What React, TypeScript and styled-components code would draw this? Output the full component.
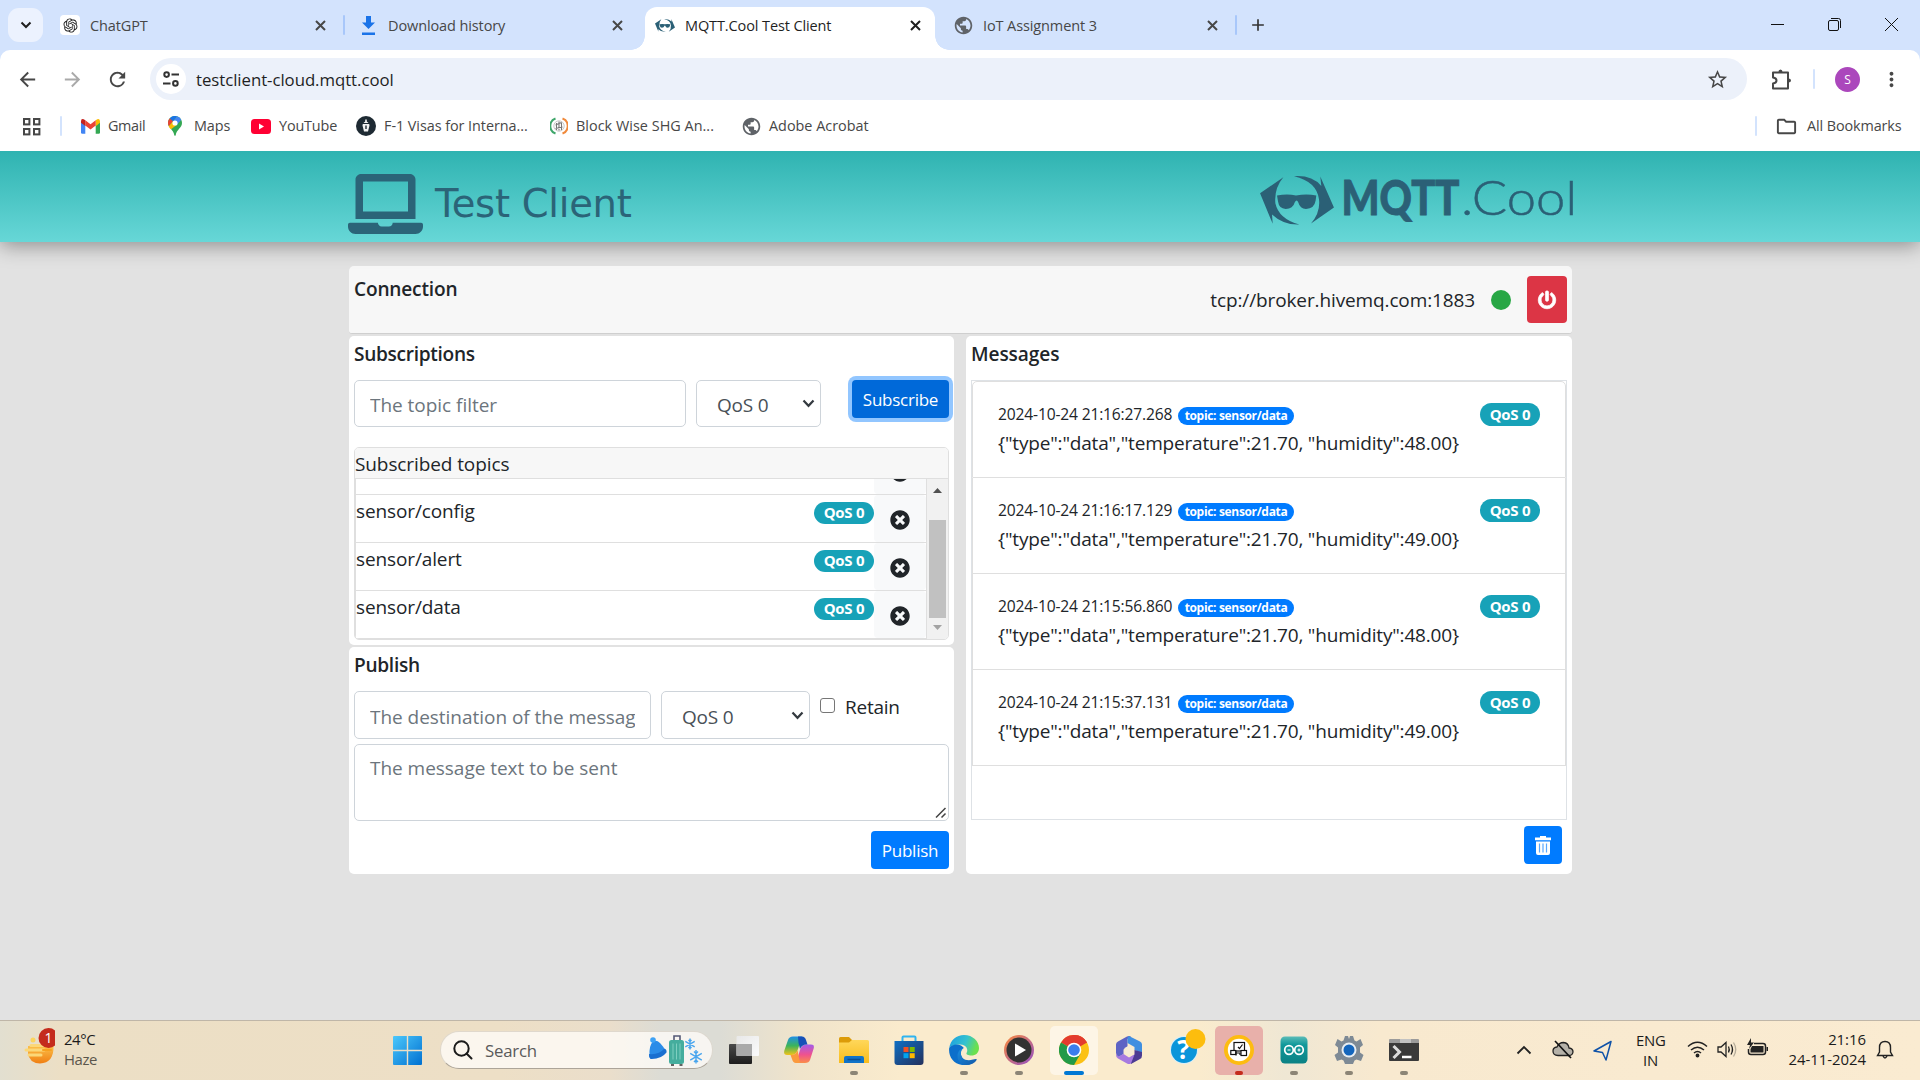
import React from 'react';
import styled, { createGlobalStyle } from 'styled-components';
import { RiOpenaiFill } from 'react-icons/ri';
import {
  MdPublic, MdStarBorder, MdMoreVert, MdOutlineFolder,
  MdArrowBack, MdArrowForward, MdRefresh, MdAdd,
} from 'react-icons/md';
import { FaLaptop, FaPowerOff, FaTimesCircle } from 'react-icons/fa';

const ui = `"Open Sans", "Noto Sans", sans-serif`;

const Global = createGlobalStyle`
  * { box-sizing: border-box; }
  html, body { margin: 0; padding: 0; }
  body { width: 1920px; height: 1080px; overflow: hidden; font-family: ${ui}; color: #212529; }
  svg { display: block; flex: none; }
`;

const Screen = styled.div`
  width: 1920px;
  height: 1080px;
  display: flex;
  flex-direction: column;
  background: #e2e2e2;
`;

/* ---------- browser chrome ---------- */

const TabStrip = styled.div`
  height: 50px;
  flex: none;
  display: flex;
  align-items: flex-start;
  background: #d3e3fd;
  padding-left: 8px;
`;

const TabSearch = styled.div`
  width: 35px;
  height: 34px;
  margin: 8px 7px 0 0;
  border-radius: 11px;
  background: #ecf2fe;
  display: grid;
  place-items: center;
`;

const Tab = styled.div<{ $w: number; $pad: string; $active?: boolean }>`
  position: relative;
  width: ${p => p.$w}px;
  height: 43px;
  margin-top: 7px;
  padding: ${p => p.$pad};
  display: flex;
  align-items: center;
  border-radius: 12px 12px 0 0;
  background: ${p => (p.$active ? '#fff' : 'transparent')};
  color: ${p => (p.$active ? '#1f1f1f' : '#474747')};
  ${p => p.$active && `
    &::before, &::after {
      content: '';
      position: absolute;
      bottom: 0;
      width: 14px;
      height: 14px;
    }
    &::before { left: -14px; background: radial-gradient(circle at 0 0, #d3e3fd 13.5px, #fff 14px); }
    &::after { right: -14px; background: radial-gradient(circle at 100% 0, #d3e3fd 13.5px, #fff 14px); }
  `}
`;

const TabIcon = styled.span<{ $plate?: boolean }>`
  width: 20px;
  height: 20px;
  margin-right: 10px;
  border-radius: 4px;
  background: ${p => (p.$plate ? '#fff' : 'transparent')};
  display: grid;
  place-items: center;
`;

const TabTitle = styled.span`
  flex: 1;
  padding-top: 2px;
  font-size: 14.5px;
  line-height: 20px;
  letter-spacing: -0.11px;
  white-space: nowrap;
`;

const Divider = styled.i<{ $color?: string; $m?: string }>`
  flex: none;
  width: 2px;
  height: 20px;
  margin: ${p => p.$m ?? '0'};
  border-radius: 1px;
  background: ${p => p.$color ?? '#a8c7fa'};
`;

const NewTab = styled.div`
  margin: 15px 0 0 11px;
  color: #333;
`;

const WindowButtons = styled.div`
  margin: 17px 21px 0 auto;
  display: flex;
  gap: 42px;
`;

const Toolbar = styled.div`
  height: 59px;
  flex: none;
  display: flex;
  align-items: center;
  padding: 0 17px 1px 16px;
  background: #fff;
  border-radius: 10px 10px 0 0;
  color: #474747;
`;

const ToolbarBack = styled.div`
  background: #d3e3fd;
`;

const NavIcons = styled.div`
  display: flex;
  gap: 22px;
  width: 134px;
  & > :nth-child(2) { color: #a9a9a9; }
`;

const Omnibox = styled.div`
  width: 1597px;
  height: 42px;
  border-radius: 21px;
  background: #ecf1fa;
  display: flex;
  align-items: center;
  padding: 0 18px 0 6px;
`;

const SiteInfo = styled.span`
  width: 30px;
  height: 30px;
  border-radius: 50%;
  background: #fff;
  display: grid;
  place-items: center;
  margin-right: 10px;
`;

const Address = styled.span`
  flex: 1;
  padding-top: 1px;
  font-size: 16.8px;
  line-height: 24px;
  letter-spacing: -0.05px;
  color: #1f1f1f;
`;

const ToolbarEnd = styled.div`
  flex: 1;
  display: flex;
  align-items: center;
  padding-left: 23px;
`;

const Avatar = styled.span`
  width: 25px;
  height: 25px;
  border-radius: 50%;
  background: #ab47bc;
  color: #fff;
  font-size: 12px;
  display: grid;
  place-items: center;
  margin-right: auto;
`;

const BookmarkBar = styled.div`
  height: 42px;
  flex: none;
  background: #fff;
  display: flex;
  align-items: center;
  padding: 0 19px 8px 22px;
  color: #474747;
`;

const Bookmark = styled.span<{ $gap: number; $ls?: number; $w?: number }>`
  display: flex;
  align-items: center;
  gap: ${p => p.$gap}px;
  width: ${p => (p.$w ? `${p.$w}px` : 'auto')};
  font-size: 14.4px;
  line-height: 20px;
  letter-spacing: ${p => p.$ls ?? -0.05}px;
  white-space: nowrap;
`;

/* ---------- page ---------- */

const Header = styled.header`
  position: relative;
  height: 91px;
  flex: none;
  display: flex;
  justify-content: space-between;
  align-items: flex-start;
  padding: 19px 341px 0 348px;
  background: linear-gradient(#2fb3b1, #67d7d7);
  box-shadow: 0 3px 20px rgba(0, 0, 0, 0.4);
  clip-path: inset(0 0 -40px 0);
  color: #2b6478;
`;

const Brand = styled.div`
  display: flex;
  gap: 12px;
  padding-top: 3px;
`;

const LaptopIcon = styled(FaLaptop)`
  width: 75px;
  height: 62px;
`;

const BrandName = styled.span`
  font-family: "DejaVu Sans", Verdana, sans-serif;
  font-size: 38.5px;
  line-height: 46px;
  margin-top: 8px;
  letter-spacing: -0.27px;
`;

const Main = styled.main`
  flex: 1;
  width: 1223px;
  margin-left: 349px;
  padding-top: 24px;
  display: flex;
  flex-direction: column;
  gap: 2px;
`;

const ConnectionCard = styled.section`
  height: 68px;
  background: #f7f7f7;
  border-bottom: 1px solid #cfcfcf;
  border-radius: 5px 5px 3px 3px;
  padding: 10px 5px;
  display: flex;
  align-items: flex-start;
`;

const Heading = styled.h2<{ $ls?: number }>`
  margin: 0;
  padding-top: 1px;
  font-size: 19.1px;
  line-height: 25px;
  font-weight: 600;
  letter-spacing: ${p => p.$ls ?? -0.18}px;
`;

const BrokerUrl = styled.span`
  margin-left: auto;
  font-size: 19px;
  line-height: 48px;
  letter-spacing: -0.12px;
`;

const StatusDot = styled.span`
  width: 20px;
  height: 20px;
  border-radius: 50%;
  background: #28a745;
  margin: 14px 16px 0 16px;
`;

const PowerButton = styled.button`
  width: 40px;
  height: 47px;
  border: 0;
  border-radius: 4px;
  background: #dc3545;
  color: #fff;
  padding: 0;
  display: grid;
  place-items: center;
  & > svg { stroke: currentColor; stroke-width: 22; overflow: visible; }
`;

const Columns = styled.div`
  display: grid;
  grid-template-columns: 605px 606px;
  column-gap: 12px;
  height: 538px;
`;

const Stack = styled.div`
  display: flex;
  flex-direction: column;
  gap: 2px;
`;

const Card = styled.section<{ $h: number }>`
  height: ${p => p.$h}px;
  background: #fff;
  border-radius: 5px;
  padding: 5px 5px 0;
`;

const FormRow = styled.div`
  display: flex;
  align-items: flex-start;
  margin-top: 13px;
`;

const Input = styled.input<{ $w: number; $h: number; $pt?: number }>`
  width: ${p => p.$w}px;
  height: ${p => p.$h}px;
  border: 1px solid #ced4da;
  border-radius: 5px;
  padding: ${p => p.$pt ?? 2}px 15px 0;
  font-family: ${ui};
  font-size: 19px;
  letter-spacing: -0.03px;
  outline: 0;
  &::placeholder { color: #6c757d; opacity: 1; }
`;

const Select = styled.div<{ $w: number; $h: number; $pt?: number }>`
  width: ${p => p.$w}px;
  height: ${p => p.$h}px;
  margin-left: 10px;
  border: 1px solid #ced4da;
  border-radius: 5px;
  padding: ${p => p.$pt ?? 2}px 5px 0 20px;
  display: flex;
  justify-content: space-between;
  align-items: center;
  font-size: 19px;
  letter-spacing: -0.2px;
  color: #495057;
  & > svg { margin-top: -3px; }
`;

const Button = styled.button<{ $w: number; $focus?: boolean }>`
  width: ${p => p.$w}px;
  height: 38px;
  border: 0;
  border-radius: 4px;
  padding: 0;
  display: grid;
  place-items: center;
  margin-left: auto;
  font-family: ${ui};
  font-size: 17px;
  letter-spacing: -0.25px;
  color: #fff;
  background: ${p => (p.$focus ? '#0069d9' : '#007bff')};
  box-shadow: ${p => (p.$focus ? '0 0 0 4px #92c6ff' : 'none')};
`;

const TopicCard = styled.div`
  height: 193px;
  margin-top: 20px;
  border: 1px solid #dfdfdf;
  border-radius: 5px;
  overflow: hidden;
`;

const TopicHead = styled.div`
  height: 31px;
  background: #f7f7f7;
  border-bottom: 1px solid #dfdfdf;
  font-size: 19px;
  line-height: 33px;
  letter-spacing: -0.1px;
`;

const TopicBody = styled.div`
  height: 160px;
  display: flex;
  overflow: hidden;
`;

const TopicList = styled.div`
  width: 572px;
  flex: none;
  border: 1px solid #dfdfdf;
  border-width: 0 1px 0 1px;
  display: flex;
  flex-direction: column;
  justify-content: flex-end;
`;

const TopicRow = styled.div`
  height: 48px;
  flex: none;
  display: flex;
  justify-content: flex-end;
  border-bottom: 1px solid #dfdfdf;
`;

const TopicName = styled.span`
  font-size: 19px;
  line-height: 33px;
  letter-spacing: -0.12px;
`;

const QosBadge = styled.span`
  width: 60px;
  height: 22px;
  margin: 7px 0 0 auto;
  border-radius: 11px;
  background: #17a2b8;
  color: #fff;
  font-size: 15px;
  font-weight: 700;
  line-height: 21px;
  letter-spacing: -0.25px;
  text-align: center;
`;

const RemoveCell = styled.span`
  width: 52px;
  background: #f8f9fa;
  border-radius: 4px;
  display: grid;
  place-items: center;
  padding-top: 2px;
`;

const ScrollTrack = styled.div`
  flex: 1;
  background: #f1f1f1;
  display: flex;
  flex-direction: column;
  align-items: center;
  padding-top: 9px;
`;

const ScrollThumb = styled.i`
  width: 17px;
  height: 98px;
  margin: 27px 0 7px;
  background: #c1c1c1;
`;

const Checkbox = styled.input`
  width: 15px;
  height: 15px;
  margin: 7px 10px 0 10px;
  appearance: none;
  border: 1px solid #767676;
  border-radius: 3px;
`;

const CheckLabel = styled.label`
  font-size: 19px;
  line-height: 33px;
  letter-spacing: -0.25px;
`;

const MessageField = styled.div`
  position: relative;
  height: 77px;
  margin: 5px 0 10px;
  & > svg { position: absolute; right: 2px; bottom: 3px; }
`;

const TextArea = styled.textarea`
  width: 100%;
  height: 100%;
  display: block;
  border: 1px solid #ced4da;
  border-radius: 5px;
  padding: 8px 15px;
  resize: none;
  font-family: ${ui};
  font-size: 19px;
  line-height: 30px;
  letter-spacing: -0.03px;
  &::placeholder { color: #6c757d; opacity: 1; }
`;

const MessageBox = styled.div`
  height: 440px;
  width: 596px;
  margin: 13px 0 6px;
  border: 1px solid #dee2e6;
`;

const Message = styled.article`
  height: 96px;
  border: 1px solid #dfdfdf;
  border-top-width: 0;
  padding: 20px 25px 0 25px;
  display: grid;
  grid-template-columns: 1fr auto;
  align-content: start;
  &:first-child { border-top-width: 1px; height: 97px; border-radius: 5px 5px 0 0; }
`;

const MessageMeta = styled.div`
  display: flex;
  align-items: flex-start;
  height: 29px;
`;

const Stamp = styled.span`
  width: 180px;
  font-size: 15.6px;
  line-height: 25px;
  letter-spacing: -0.16px;
  white-space: nowrap;
`;

const TopicBadge = styled.span`
  width: 116px;
  height: 18px;
  margin-top: 5px;
  border-radius: 9px;
  background: #007bff;
  color: #fff;
  font-size: 12px;
  font-weight: 700;
  line-height: 18px;
  letter-spacing: -0.33px;
  text-align: center;
`;

const MessageQos = styled(QosBadge)`
  height: 23px;
  line-height: 22px;
  margin-top: 1px;
  border-radius: 12px;
`;

const Payload = styled.div`
  grid-column: 1 / -1;
  font-size: 19px;
  line-height: 24px;
  letter-spacing: -0.18px;
  white-space: nowrap;
`;

const TrashSlot = styled.div`
  display: flex;
  padding-right: 5px;
`;

/* ---------- taskbar ---------- */

const Taskbar = styled.footer`
  height: 60px;
  flex: none;
  border-top: 1px solid #bfb6a8;
  background: linear-gradient(90deg, #e2dfd0 0, #ecdfc5 60px, #eddfc6 500px, #eadecb 610px, #dcdcd5 660px, #dcdcd5 720px, #f0e4cb 800px, #faebcd 900px, #faebcd 1200px, #efe7d4 1285px, #f8e9cf 1380px, #faebd1 100%);
  display: flex;
  color: #1b1b1b;
`;

const Weather = styled.div`
  width: 380px;
  padding: 7px 0 0 24px;
  display: flex;
  gap: 9px;
`;

const TwoLines = styled.div<{ $align?: string; $ls?: number; $w?: number; $mt?: number }>`
  width: ${p => (p.$w ? `${p.$w}px` : 'auto')};
  margin-top: ${p => p.$mt ?? 1}px;
  font-size: 14.9px;
  line-height: 20px;
  letter-spacing: ${p => p.$ls ?? -0.4}px;
  text-align: ${p => p.$align ?? 'left'};
  white-space: nowrap;
  & > .dim { color: #5b564c; }
`;

const StartCell = styled.div`
  width: 60px;
  padding: 15px 0 0 13px;
`;

const SearchPill = styled.div`
  width: 273px;
  height: 38px;
  margin: 10px 3px 0 0;
  border-radius: 19px;
  background: rgba(255, 253, 248, 0.78);
  border: 1px solid rgba(160, 150, 130, 0.3);
  border-bottom-color: rgba(120, 110, 95, 0.6);
  display: flex;
  align-items: center;
  padding: 0 8px 0 12px;
  & > span {
    flex: 1;
    margin-left: 12px;
    font-size: 16.8px;
    letter-spacing: -0.2px;
    color: #5a5a5a;
  }
`;

const AppCell = styled.div<{ $hl?: string }>`
  width: 55px;
  padding-top: 5px;
  display: flex;
  justify-content: center;
  & > div {
    position: relative;
    width: 48px;
    height: 49px;
    border-radius: 5px;
    background: ${p => p.$hl ?? 'transparent'};
    display: flex;
    flex-direction: column;
    align-items: center;
    justify-content: space-between;
    padding-top: 9px;
  }
`;

const HelpCell = styled(AppCell)`
  & > div { padding-top: 3px; }
  svg { margin-left: 8px; }
`;

const Running = styled.i<{ $w?: number; $c?: string }>`
  width: ${p => p.$w ?? 8}px;
  height: 4px;
  border-radius: 2px;
  background: ${p => p.$c ?? '#8c8576'};
`;

const Tray = styled.div`
  margin-left: auto;
  display: flex;
  align-items: flex-start;
  padding: 7px 26px 0 0;
`;

const TrayIcon = styled.span<{ $w: number; $mt: number; $pl?: number }>`
  width: ${p => p.$w}px;
  margin-top: ${p => p.$mt}px;
  padding-left: ${p => p.$pl ?? 0}px;
`;

/* ---------- drawings ---------- */

const CoolShapes = () => (
  <>
    <path d="M250 82 L180 130 L218 222 L216 194 Q250 226 298 224 Q236 207 226 160 Q222 115 250 82Z" />
    <path d="M282 79 Q335 75 364 108 L361 80 L402 173 L333 221 Q362 188 357 148 Q350 95 282 79Z" />
    <path d="M231 137 Q262 130 288 137 Q320 130 349 137 L347 152 Q343 177 318 177 Q300 177 295 158 Q290 145 284 158 Q279 177 257 177 Q237 177 234 155Z" />
  </>
);

const CoolMark = ({ w, h }: { w: number; h: number }) => (
  <svg width={w} height={h} viewBox="180 77 222 149" fill="#2b6076"><CoolShapes /></svg>
);

const LogoArt = styled.svg`
  margin-top: -12px;
`;

const Logo = () => (
  <LogoArt width="320" height="84" viewBox="1258 158 320 84" fill="#2b6076">
    <svg x="1259" y="175.6" width="74" height="49.6" viewBox="180 77 222 149"><CoolShapes /></svg>
    <text x="1340.500" y="215" fontFamily="Lato, sans-serif" fontWeight="900" fontSize="47.500" textLength="118" lengthAdjust="spacingAndGlyphs" stroke="#2b6076" strokeWidth="0.900">MQTT</text>
    <text x="1460" y="215" fontFamily="Lato, sans-serif" fontWeight="300" fontSize="47.500" textLength="116" lengthAdjust="spacingAndGlyphs" stroke="#2b6076" strokeWidth="0.500">.Cool</text>
  </LogoArt>
);

const TabClose = () => (
  <svg width="17" height="17" viewBox="0 0 17 17" fill="none" stroke="currentColor" strokeWidth="2"><path d="M4 4L13 13M13 4L4 13" /></svg>
);

const TabSearchArrow = () => (
  <svg width="12" height="8" viewBox="0 0 12 8" fill="none" stroke="#1f1f1f" strokeWidth="2"><path d="M1.500 1.500L6 6L10.500 1.500" /></svg>
);

const TuneIcon = () => (
  <svg width="18" height="18" viewBox="0 0 18 18" fill="none" stroke="#333" strokeWidth="2">
    <circle cx="4.6" cy="4.6" r="2.3" /><path d="M9.5 4.6H17M1 13.4H8.5" /><circle cx="13.4" cy="13.4" r="2.3" />
  </svg>
);

const PuzzleIcon = () => (
  <svg width="22" height="22" viewBox="0 0 22 22" fill="none" stroke="#474747" strokeWidth="2" strokeLinejoin="round">
    <path d="M3 4.500H18V20.500H3V15.500Q6.500 15 6.500 12.500T3 9.500Z" />
    <path d="M8.500 4Q8.500 1.500 10.500 1.500T12.500 4ZM18.500 10.500Q21 10.500 21 12.500T18.500 14.500Z" fill="#474747" stroke="none" />
  </svg>
);

const AppsIcon = () => (
  <svg width="19" height="19" viewBox="0 0 19 19" fill="none" stroke="#474747" strokeWidth="2">
    <rect x="2" y="2" width="5.4" height="5.4" /><rect x="12" y="2" width="5.4" height="5.4" />
    <rect x="2" y="12" width="5.4" height="5.4" /><rect x="12" y="12" width="5.4" height="5.4" />
  </svg>
);

const GmailIcon = () => (
  <svg width="19" height="15" viewBox="0 0 19 15">
    <path d="M0 2.5V13.5Q0 14.8 1.3 14.8H4.3V6Z" fill="#4285f4" />
    <path d="M19 2.5V13.5Q19 14.8 17.7 14.8H14.7V6Z" fill="#34a853" />
    <path d="M14.7 6V1.2Q19 -1.6 19 2.6V3.8L14.7 7.2Z" fill="#fbbc04" />
    <path d="M4.3 6.6V1.3L9.5 5.2L14.7 1.3V6.6L9.5 10.6Z" fill="#ea4335" />
    <path d="M0 3.8V2.6Q0 -1.6 4.3 1.3V7Z" fill="#c5221f" />
  </svg>
);

const MapsIcon = () => (
  <svg width="14" height="20" viewBox="0 0 14 20">
    <path d="M7 0C3 0 0 3 0 7c0 5 5.5 6.500 6.300 12.200q.7 1.200 1.400 0C8.500 13.500 14 12 14 7c0-4-3-7-7-7Z" fill="#34a853" />
    <path d="M1.700 2.400A7 7 0 0 1 9 .3L4.500 5.500Z" fill="#1a73e8" />
    <path d="M1.700 2.400L5 5.200L.8 10.200C-.5 7.500-.2 4.500 1.700 2.400Z" fill="#ea4335" />
    <path d="M9 .3A7 7 0 0 1 13.200 3.800L9.300 8.500L5 5.200Z" fill="#4285f4" />
    <path d="M5 8.500L9 8.800L3 13.300Q1.500 12 .8 10.200L4.700 5.600Z" fill="#fbbc04" />
    <circle cx="7" cy="7" r="2.600" fill="#fff" />
  </svg>
);

const YoutubeIcon = () => (
  <svg width="20" height="15" viewBox="0 0 20 15">
    <rect width="20" height="15" rx="3.500" fill="#ff0033" /><path d="M8 4.500v6l5-3Z" fill="#fff" />
  </svg>
);

const VisaIcon = () => (
  <svg width="20" height="20" viewBox="0 0 20 20">
    <circle cx="10" cy="10" r="10" fill="#1e2a33" />
    <path d="M9.200 3.500h1.600v2l1.700 1.500H7.500L9.200 5.500ZM6.800 8h6.400l.3 1.500-1.500 6H8l-1.500-6Z" fill="#f2f2f2" /><path d="M9.300 9.500h1.400v3.500H9.300Z" fill="#1e2a33" />
  </svg>
);

const ShgIcon = () => (
  <svg width="18" height="18" viewBox="0 0 18 18" fill="none">
    <path d="M5.500 1.500A8 8 0 0 0 5.500 16.500" stroke="#3fa66b" strokeWidth="2" /><path d="M12.500 1.500A8 8 0 0 1 12.500 16.500" stroke="#f08a3c" strokeWidth="2" />
    <circle cx="9" cy="9" r="5.200" stroke="#c9c9c9" />
    <path d="M6.500 6v7M9 4.500v9M11.500 5.500v7.500M5.500 8l6-2.500M5.500 11.500l7-1.500" stroke="#777" strokeWidth="1.100" />
  </svg>
);

const Chevron = () => (
  <svg width="13" height="9" viewBox="0 0 13 9" fill="none" stroke="#343a40" strokeWidth="2.200"><path d="M1.500 1.500L6.500 6.800L11.500 1.500" /></svg>
);

const TrashIcon = () => (
  <svg width="16" height="19" viewBox="0 0 16 19" fill="#fff">
    <path d="M5 0h6v1.500h5v2.800H0V1.500h5ZM1 5.500h14V17q0 2-2 2H3q-2 0-2-2Z" />
    <path d="M4.500 7.500v9M8 7.500v9M11.500 7.500v9" stroke="#58a8ff" strokeWidth="1.200" />
  </svg>
);

const HazeIcon = () => (
  <svg width="31" height="36" viewBox="0 0 31 36">
    <defs><linearGradient id="hz" x1="0" y1="0" x2="0" y2="1"><stop offset="0" stopColor="#fbc04a" /><stop offset="1" stopColor="#f07f13" /></linearGradient></defs>
    <path d="M4 18H29.500Q30 35 16 35.500Q5 35 4 25Z" fill="url(#hz)" />
    <path d="M7 17.500h20M2 22h18M5 27h12" stroke="#fbd778" strokeWidth="3" strokeLinecap="round" />
    <path d="M19 22h8" stroke="#f7a11f" strokeWidth="2" strokeLinecap="round" />
    <circle cx="9" cy="12" r="2.500" fill="#fbd45f" />
    <circle cx="24.500" cy="10" r="10" fill="#c42b1c" />
    <text x="24.500" y="15" textAnchor="middle" fontFamily="Open Sans, sans-serif" fontSize="14" fill="#fff">1</text>
  </svg>
);

const WindowsIcon = () => (
  <svg width="29" height="29" viewBox="0 0 29 29">
    <defs><linearGradient id="win" x1="0" y1="0" x2="1" y2="1"><stop offset="0" stopColor="#4cc8fb" /><stop offset="1" stopColor="#0070d1" /></linearGradient></defs>
    <path d="M1 0H13.800V13.800H0V1Q0 0 1 0ZM15.200 0H28Q29 0 29 1V13.800H15.200ZM0 15.200H13.800V29H1Q0 29 0 28ZM15.200 15.200H29V28Q29 29 28 29H15.200Z" fill="url(#win)" />
  </svg>
);

const TravelArt = () => (
  <svg width="57" height="32" viewBox="0 0 57 32">
    <path d="M2.500 21Q2 12 5.500 8Q9 5 13 9Q17 13 18.500 17Q14 23 2.500 22Z" fill="#2b8ce8" /><circle cx="6" cy="6" r="2.800" fill="#3ea2f5" />
    <path d="M2 20Q12 21 17.500 14.500Q20 15.500 19.500 18.500Q14 25.500 3.500 25Q1.500 23 2 20Z" fill="#1a6fd0" />
    <path d="M27 6V2h6v4" fill="none" stroke="#555a77" strokeWidth="1.600" />
    <rect x="22" y="6" width="15" height="24" rx="2.500" fill="#45ad9d" />
    <path d="M26 9.500v16M29.500 9.500v16M33 9.500v16" stroke="#7fcfc0" strokeWidth="1" />
    <path d="M24 31h3M32.500 31h3" stroke="#333" strokeWidth="1.500" />
    <g stroke="#4aa6ee" strokeWidth="1.400" fill="none">
      <path d="M43 4.500v11M38.300 7.300l9.400 5.500M38.300 12.800l9.400-5.500M41.500 6l1.500 1.500 1.500-1.500M41.500 14l1.500-1.500 1.500 1.500" />
      <path d="M49 16v13.500M43.200 19.400l11.600 6.700M43.200 26.100l11.600-6.700M47 17.500l2 2 2-2M47 28l2-2 2 2" />
    </g>
  </svg>
);

const icon = { width: 30, height: 30, viewBox: '0 0 30 30' };

const TaskViewIcon = () => (
  <svg {...icon}>
    <defs>
      <linearGradient id="tv" x1="0" y1="0" x2="0" y2="1"><stop offset="0" stopColor="#4a4a4a" /><stop offset="1" stopColor="#1d1d1d" /></linearGradient>
      <linearGradient id="tv2" x1="0" y1="0" x2="1" y2="1"><stop offset="0" stopColor="#e8e8e8" /><stop offset="1" stopColor="#fbfbfb" /></linearGradient>
    </defs>
    <rect x="0" y="9" width="23" height="20" rx="1" fill="url(#tv)" /><rect x="7.500" y="1" width="22.500" height="20" rx="1" fill="url(#tv2)" />
    <path d="M7.500 9H23V21H7.500Z" fill="#a9a9a9" />
  </svg>
);

const CopilotIcon = () => (
  <svg {...icon}>
    <defs>
      <linearGradient id="cp1" x1="0" y1="0" x2="0" y2="1"><stop offset="0" stopColor="#1f8fe8" /><stop offset=".5" stopColor="#3cb45a" /><stop offset="1" stopColor="#f2c21a" /></linearGradient>
      <linearGradient id="cp2" x1="0" y1="0" x2="0" y2="1"><stop offset="0" stopColor="#a35bea" /><stop offset=".55" stopColor="#f0528e" /><stop offset="1" stopColor="#fb8d4a" /></linearGradient>
    </defs>
    <path d="M9 1.500H18L14 14Q12 20 8 20H3Q-1 20 .5 15L4 5Q5 1.500 9 1.500Z" fill="url(#cp1)" />
    <path d="M21 28H12L16 15Q18 9.500 22 9.500H27Q31 9.500 29.500 14L26 25Q25 28 21 28Z" fill="url(#cp2)" />
    <path d="M14 1.500H18Q21 1.500 22 5L23.500 9.500Q18 9 16 14Q14 8 14 1.500Z" fill="#1650b8" />
    <path d="M16 28H12Q9 28 8 24L6.500 20Q12 20.500 13.500 15Z" fill="#fb9a3d" />
  </svg>
);

const ExplorerIcon = () => (
  <svg {...icon}>
    <defs><linearGradient id="ex" x1="0" y1="0" x2="0" y2="1"><stop offset="0" stopColor="#ffd75a" /><stop offset="1" stopColor="#f8bc1c" /></linearGradient></defs>
    <path d="M0 3.500Q0 2 1.500 2H10l3 3V10H0Z" fill="#dc9b09" /><path d="M0 7.500H10L13 5H28.500Q30 5 30 6.500V28H0Z" fill="url(#ex)" />
    <path d="M5 28V23Q5 21 7 21H23Q25 21 25 23V28Z" fill="#1173c8" /><path d="M8.500 24.500H21.500" stroke="#0b4f93" strokeWidth="1.500" />
  </svg>
);

const StoreIcon = () => (
  <svg {...icon}>
    <defs><linearGradient id="st" x1="0" y1="0" x2="1" y2="1"><stop offset="0" stopColor="#0f6fc4" /><stop offset="1" stopColor="#24305c" /></linearGradient></defs>
    <path d="M8.500 7V2.500Q8.500 1.500 9.500 1.500H20.500Q21.500 1.500 21.500 2.500V7" fill="none" stroke="#2fb4f0" strokeWidth="2" />
    <path d="M.5 6H29.500V27Q29.500 30 26.500 30H3.500Q.5 30 .5 27Z" fill="url(#st)" />
    <path d="M9.500 12H14.500V17H9.500Z" fill="#f25022" /><path d="M15.700 12H20.700V17H15.700Z" fill="#7fba00" /><path d="M9.500 18.200H14.500V23.200H9.500Z" fill="#00a4ef" /><path d="M15.700 18.200H20.700V23.200H15.700Z" fill="#ffb900" />
  </svg>
);

const EdgeIcon = () => (
  <svg {...icon}>
    <defs>
      <linearGradient id="eg1" x1="0" y1="0" x2="1" y2="0.300"><stop offset="0" stopColor="#1b9de2" /><stop offset=".6" stopColor="#35c2cf" /><stop offset="1" stopColor="#6be04e" /></linearGradient>
      <linearGradient id="eg2" x1="0" y1="0" x2="1" y2="1"><stop offset="0" stopColor="#1a8de0" /><stop offset="1" stopColor="#1258a8" /></linearGradient>
    </defs>
    <path d="M.2 13C1.500 5 7.500 0 15 0C24 0 30 6.500 30 13C30 18 26.500 20.500 22.500 20.500C19 20.500 17 19.500 17.500 18C19.500 15.500 18 9.500 11 9.500C6 9.500 2 11 .2 13Z" fill="url(#eg1)" />
    <path d="M.2 13C2.500 9.500 8 8.500 12 10.500Q14.500 12 14.800 13Q11 15 12 20Q14 27.500 22 29Q18 30.500 13 30C4 29 -.8 21 .2 13Z" fill="#0c6fcb" />
    <path d="M12 17C11 23 17 27 24 24.500Q27 23.500 28 24.500Q25 30 16 30Q8 28 8.500 20Q9 15 14 13Q12.200 15 12 17Z" fill="url(#eg2)" />
  </svg>
);

const MediaIcon = () => (
  <svg {...icon}>
    <defs><linearGradient id="md" x1="0" y1="0" x2="1" y2="1"><stop offset="0" stopColor="#fb8a3a" /><stop offset="1" stopColor="#9250c8" /></linearGradient></defs>
    <circle cx="15" cy="15" r="15" fill="url(#md)" /><circle cx="15" cy="15" r="12.500" fill="#323232" /><path d="M11 8.500V21.500L22 15Z" fill="#fff" />
  </svg>
);

const ChromeIcon = () => (
  <svg {...icon}>
    <circle cx="15" cy="15" r="15" fill="#fbc116" />
    <path d="M15 15L2 7.500A15 15 0 0 1 28 7.500Z" fill="#e33b2e" /><path d="M15 7.500H28.000A15 15 0 0 0 15 0Z" fill="#e33b2e" />
    <path d="M15 15L2 7.500A15 15 0 0 0 15 30L21.500 18.800Z" fill="#229a48" />
    <circle cx="15" cy="15" r="7.300" fill="#fff" /><circle cx="15" cy="15" r="5.800" fill="#3b7ded" />
  </svg>
);

const OfficeIcon = () => (
  <svg {...icon}>
    <path d="M13 1.500Q15 .5 17 1.500L13.500 4V12L9.500 14.500V19L4.500 22Q2 20.500 2 18V9.500Q2 7.500 4 6.500Z" fill="#5d63c4" />
    <path d="M15 1L26 6.500Q28 7.500 28 9.500V18L20.500 15V12L13.500 8V4Q13.500 1.500 15 1Z" fill="#3f8fe0" />
    <path d="M20.500 15L28 17V20.500Q28 23 26 24L17 29V22L20.500 19.500Z" fill="#4c3b92" />
    <path d="M2 18Q2 20.500 4.500 21.500L9.500 19L15 22.500L20.500 19.500L17 28.500Q15 29.700 13 28.500L4 23.500Q2 22.500 2 20Z" fill="#a77ae0" />
    <path d="M15 10.500L19.500 13V17.500L15 20.200L10.500 17.500V13Z" fill="#f6ecd4" />
  </svg>
);

const HelpIcon = () => (
  <svg width="36" height="40" viewBox="0 0 36 40">
    <circle cx="14" cy="21" r="14" fill="#d9eef7" /><circle cx="14" cy="21" r="13" fill="#0a95da" />
    <text x="13.500" y="30" textAnchor="middle" fontFamily="Open Sans, sans-serif" fontWeight="700" fontSize="26" fill="#fff">?</text>
    <circle cx="25.500" cy="10" r="10" fill="#fdbd0d" />
  </svg>
);

const BoardIcon = () => (
  <svg {...icon}>
    <circle cx="15" cy="15" r="15" fill="#fdbc11" /><circle cx="15" cy="15" r="11.200" fill="#fff" />
    <g fill="#fff" stroke="#111" strokeWidth="1.200"><rect x="10" y="7.500" width="10.500" height="8.500" /><rect x="6.800" y="15.500" width="5" height="4" /><rect x="17" y="15.500" width="5.500" height="5" /><path d="M12 20.500v-4M12 18h4v2M14 12l1.500 1.500 3-4" /></g>
  </svg>
);

const ArduinoIcon = () => (
  <svg {...icon}>
    <defs><linearGradient id="ar" x1="0" y1="0" x2="0" y2="1"><stop offset="0" stopColor="#5bbcb8" /><stop offset=".3" stopColor="#12999b" /><stop offset="1" stopColor="#0b8184" /></linearGradient></defs>
    <rect x="1.500" y="1.500" width="27" height="27" rx="4.500" fill="url(#ar)" />
    <g fill="none" stroke="#fff" strokeWidth="1.700"><circle cx="10" cy="15" r="4.300" /><circle cx="20" cy="15" r="4.300" /><path d="M8.500 15h3M18.500 15h3M20 13.500v3" strokeWidth="1" /></g>
  </svg>
);

const GearIcon = () => (
  <svg {...icon}>
    <path d="M11 1H14L15 4L16 1H19L20.500 5.500L22.500 6.500L26.500 4L29 10L26 12.500V17.500L29.500 20L27 26L22.500 24.500L20.500 25.500L19 29H11L9.500 25.500L7.500 24.500L3 26L.5 20L4 17.500V12.500L1 10L3.500 4L7.500 6.500L9.500 5.500Z" fill="#7e8a95" />
    <circle cx="15" cy="15" r="7.500" fill="#e8eef3" /><circle cx="15" cy="15" r="5.500" fill="#1466bd" />
  </svg>
);

const TerminalIcon = () => (
  <svg {...icon}>
    <path d="M0 5Q0 4 1 4H29Q30 4 30 5V8H0Z" fill="#9b9b9b" /><path d="M11 4H22V8H11Z" fill="#c2c2c2" /><path d="M0 8H30V25Q30 26 29 26H1Q0 26 0 25Z" fill="#3a3a3a" />
    <path d="M4.500 11L10.500 17L4.500 23" fill="none" stroke="#dcdcdc" strokeWidth="3" /><path d="M13 22H22.500" stroke="#fff" strokeWidth="2.500" />
  </svg>
);

/* ---------- data ---------- */

const topics = ['sensor/config', 'sensor/alert', 'sensor/data'];

const messages = [
  { at: '2024-10-24 21:16:27.268', humidity: '48.00' },
  { at: '2024-10-24 21:16:17.129', humidity: '49.00' },
  { at: '2024-10-24 21:15:56.860', humidity: '48.00' },
  { at: '2024-10-24 21:15:37.131', humidity: '49.00' },
];

const apps: { el: React.ReactNode; run?: React.ReactNode; hl?: string; badge?: boolean }[] = [
  { el: <TaskViewIcon /> },
  { el: <CopilotIcon /> },
  { el: <ExplorerIcon />, run: <Running /> },
  { el: <StoreIcon /> },
  { el: <EdgeIcon />, run: <Running /> },
  { el: <MediaIcon />, run: <Running /> },
  { el: <ChromeIcon />, run: <Running $w={20} $c="#0078d4" />, hl: '#fdf5e6' },
  { el: <OfficeIcon /> },
  { el: <HelpIcon />, badge: true },
  { el: <BoardIcon />, run: <Running $c="#c42b1c" />, hl: '#e8b0aa' },
  { el: <ArduinoIcon />, run: <Running /> },
  { el: <GearIcon />, run: <Running /> },
  { el: <TerminalIcon />, run: <Running /> },
];

function Browser() {
  return (
    <>
      <TabStrip>
        <TabSearch><TabSearchArrow /></TabSearch>
        <Tab $w={293} $pad="0 14.5px 7px 10px">
          <TabIcon $plate><RiOpenaiFill size={17} color="#222" /></TabIcon>
          <TabTitle>ChatGPT</TabTitle>
          <TabClose />
        </Tab>
        <Divider $m="15px 0 0" />
        <Tab $w={300} $pad="0 19.5px 7px 13px">
          <TabIcon>
            <svg width="13" height="19" viewBox="0 0 13 19" fill="#1a73e8"><path d="M4 0h5v6.500h4L6.500 13 0 6.500h4ZM0 16.500h13V19H0Z" /></svg>
          </TabIcon>
          <TabTitle>Download history</TabTitle>
          <TabClose />
        </Tab>
        <Tab $w={290} $pad="0 11.5px 7px 10px" $active>
          <TabIcon><CoolMark w={20} h={15} /></TabIcon>
          <TabTitle>MQTT.Cool Test Client</TabTitle>
          <TabClose />
        </Tab>
        <Tab $w={300} $pad="0 14.5px 7px 18px">
          <TabIcon><MdPublic size={21} color="#5f6368" /></TabIcon>
          <TabTitle>IoT Assignment 3</TabTitle>
          <TabClose />
        </Tab>
        <Divider $m="15px 0 0" />
        <NewTab><MdAdd size={20} /></NewTab>
        <WindowButtons>
          <svg width="15" height="15" viewBox="0 0 15 15" stroke="#111"><path d="M1 7.500h13" /></svg>
          <svg width="15" height="15" viewBox="0 0 15 15" fill="none" stroke="#111"><rect x="1.500" y="3.500" width="10" height="10" rx="1.500" /><path d="M4 1.500h7.500q2 0 2 2V11" /></svg>
          <svg width="15" height="15" viewBox="0 0 15 15" stroke="#111"><path d="M1 1l13 13M14 1L1 14" /></svg>
        </WindowButtons>
      </TabStrip>
      <ToolbarBack>
        <Toolbar>
          <NavIcons><MdArrowBack size={23} /><MdArrowForward size={23} /><MdRefresh size={23} /></NavIcons>
          <Omnibox>
            <SiteInfo><TuneIcon /></SiteInfo>
            <Address>testclient-cloud.mqtt.cool</Address>
            <MdStarBorder size={23} />
          </Omnibox>
          <ToolbarEnd>
            <PuzzleIcon />
            <Divider $color="#d3e3fd" $m="0 20px 0 21px" />
            <Avatar>S</Avatar>
            <MdMoreVert size={23} />
          </ToolbarEnd>
        </Toolbar>
      </ToolbarBack>
      <BookmarkBar>
        <AppsIcon />
        <Divider $color="#d3e3fd" $m="0 19px" />
        <Bookmark $gap={8} $w={87} $ls={-0.35}><GmailIcon />Gmail</Bookmark>
        <Bookmark $gap={12} $w={83} $ls={-0.1}><MapsIcon />Maps</Bookmark>
        <Bookmark $gap={8} $w={105} $ls={-0.15}><YoutubeIcon />YouTube</Bookmark>
        <Bookmark $gap={8} $w={194}><VisaIcon />F-1 Visas for Interna...</Bookmark>
        <Bookmark $gap={8} $w={191} $ls={0.03}><ShgIcon />Block Wise SHG An...</Bookmark>
        <Bookmark $gap={7} $ls={0}><MdPublic size={21} color="#5f6368" />Adobe Acrobat</Bookmark>
        <Divider $color="#d3e3fd" $m="0 18px 0 auto" />
        <Bookmark $gap={9} $w={126} $ls={-0.1}><MdOutlineFolder size={23} />All Bookmarks</Bookmark>
      </BookmarkBar>
    </>
  );
}

function Page() {
  return (
    <>
      <Header>
        <Brand><LaptopIcon /><BrandName>Test Client</BrandName></Brand>
        <Logo />
      </Header>
      <Main>
        <ConnectionCard>
          <Heading>Connection</Heading>
          <BrokerUrl>tcp://broker.hivemq.com:1883</BrokerUrl>
          <StatusDot />
          <PowerButton><FaPowerOff size={18} /></PowerButton>
        </ConnectionCard>
        <Columns>
          <Stack>
            <Card $h={309}>
              <Heading $ls={-0.3}>Subscriptions</Heading>
              <FormRow>
                <Input $w={332} $h={47} placeholder="The topic filter" />
                <Select $w={125} $h={47}>QoS 0<Chevron /></Select>
                <Button $w={97} $focus>Subscribe</Button>
              </FormRow>
              <TopicCard>
                <TopicHead>Subscribed topics</TopicHead>
                <TopicBody>
                  <TopicList>
                    <TopicRow><RemoveCell><FaTimesCircle size={20} /></RemoveCell></TopicRow>
                    {topics.map(t => (
                      <TopicRow key={t}>
                        <TopicName>{t}</TopicName>
                        <QosBadge>QoS 0</QosBadge>
                        <RemoveCell><FaTimesCircle size={20} /></RemoveCell>
                      </TopicRow>
                    ))}
                  </TopicList>
                  <ScrollTrack>
                    <svg width="9" height="5" fill="#505050"><path d="M0 5L4.500 0L9 5Z" /></svg>
                    <ScrollThumb />
                    <svg width="9" height="5" fill="#a3a3a3"><path d="M0 0L4.500 5L9 0Z" /></svg>
                  </ScrollTrack>
                </TopicBody>
              </TopicCard>
            </Card>
            <Card $h={227}>
              <Heading $ls={-0.3}>Publish</Heading>
              <FormRow>
                <Input $w={297} $h={48} $pt={4} placeholder="The destination of the message" />
                <Select $w={149} $h={48} $pt={4}>QoS 0<Chevron /></Select>
                <Checkbox type="checkbox" />
                <CheckLabel>Retain</CheckLabel>
              </FormRow>
              <MessageField>
                <TextArea placeholder="The message text to be sent" />
                <svg width="12" height="11" viewBox="0 0 12 11" stroke="#444" strokeWidth="1.500"><path d="M1 10.500L10.500 1M6.500 10.500L10.500 6.500" /></svg>
              </MessageField>
              <Button $w={78}>Publish</Button>
            </Card>
          </Stack>
          <Card $h={538}>
            <Heading $ls={-0.1}>Messages</Heading>
            <MessageBox>
              {messages.map(m => (
                <Message key={m.at}>
                  <MessageMeta><Stamp>{m.at}</Stamp><TopicBadge>topic: sensor/data</TopicBadge></MessageMeta>
                  <MessageQos>QoS 0</MessageQos>
                  <Payload>{`{"type":"data","temperature":21.70, "humidity":${m.humidity}}`}</Payload>
                </Message>
              ))}
            </MessageBox>
            <TrashSlot><Button $w={38}><TrashIcon /></Button></TrashSlot>
          </Card>
        </Columns>
      </Main>
    </>
  );
}

function SystemBar() {
  return (
    <Taskbar>
      <Weather>
        <HazeIcon />
        <TwoLines>24°C<div className="dim">Haze</div></TwoLines>
      </Weather>
      <StartCell><WindowsIcon /></StartCell>
      <SearchPill>
        <svg width="20" height="20" viewBox="0 0 20 20" fill="none" stroke="#1b1b1b" strokeWidth="2"><circle cx="8.500" cy="8.500" r="7.200" /><path d="M13.500 13.500L18.500 18.500" strokeLinecap="round" /></svg>
        <span>Search</span>
        <TravelArt />
      </SearchPill>
      {apps.map((a, i) => {
        const Cell = a.badge ? HelpCell : AppCell;
        return <Cell key={i} $hl={a.hl}><div>{a.el}{a.run}</div></Cell>;
      })}
      <Tray>
        <TrayIcon $w={36} $mt={17}>
          <svg width="16" height="10" viewBox="0 0 16 10" fill="none" stroke="#222" strokeWidth="1.800"><path d="M1.500 8.500L8 2L14.500 8.500" /></svg>
        </TrayIcon>
        <TrayIcon $w={41} $mt={12}>
          <svg width="22" height="19" viewBox="0 0 22 19"><path d="M6 15.500Q1 15.500 1 11Q1 7.500 5 7Q7 2.500 11.500 2.500Q16.500 3 17 8Q21 8.500 21 12Q20.500 15.500 17 15.500Z" fill="#b5b1a8" stroke="#222" strokeWidth="1.300" /><path d="M3 1L19 18" stroke="#111" strokeWidth="1.700" /></svg>
        </TrayIcon>
        <TrayIcon $w={43} $mt={12}>
          <svg width="20" height="21" viewBox="0 0 20 21" fill="none" stroke="#0f52a8" strokeWidth="1.500" strokeLinejoin="round"><path d="M18 1.500L1 11L9.500 12.500L13 20Z" /></svg>
        </TrayIcon>
        <TwoLines $align="center" $w={29} $mt={2} $ls={-0.3}>ENG<div>IN</div></TwoLines>
        <TrayIcon $w={29} $mt={13} $pl={22}>
          <svg width="21" height="17" viewBox="0 0 21 17" fill="none" stroke="#222" strokeWidth="1.500"><path d="M1 5.500Q10.500-3 20 5.500M4 9Q10.500 3.500 17 9M7 12Q10.500 9 14 12" /><circle cx="10.500" cy="14.500" r="1.200" fill="#222" /></svg>
        </TrayIcon>
        <TrayIcon $w={30} $mt={13} $pl={23}>
          <svg width="20" height="17" viewBox="0 0 20 17" fill="none" stroke="#222" strokeWidth="1.300"><path d="M1 6h3L9 1.500v14L4 11H1Z" /><path d="M11.500 5.500Q13 8.500 11.500 11.500M14 3.500Q17 8.500 14 13.500" /><path d="M16.500 1.500Q21 8.500 16.500 15.500" stroke="#b5ac9a" /></svg>
        </TrayIcon>
        <TrayIcon $w={64} $mt={10} $pl={23}>
          <svg width="21" height="19" viewBox="0 0 21 19"><path d="M7 5.500H16Q18.500 5.500 18.500 8V14Q18.500 16.500 16 16.500H4Q1.500 16.500 1.500 14V11" fill="none" stroke="#222" strokeWidth="1.500" /><path d="M5 8H16.500V14.500H3.500V11Z" fill="#222" /><path d="M19.500 9h1.500v4h-1.500ZM4 0L0 7H3L2 11L7 4.500H4Z" fill="#222" /></svg>
        </TrayIcon>
        <TwoLines $align="right" $w={78} $ls={-0.02}>21:16<div>24-11-2024</div></TwoLines>
        <TrayIcon $w={28} $mt={12} $pl={10}>
          <svg width="18" height="20" viewBox="0 0 18 20" fill="none" stroke="#222" strokeWidth="1.400"><path d="M1.500 15.500L3.500 12V7.500Q3.500 1.500 9 1.500T14.500 7.500V12L16.500 15.500ZM7 16Q9 20 11 16" /></svg>
        </TrayIcon>
      </Tray>
    </Taskbar>
  );
}

export default function App() {
  return (
    <Screen>
      <Global />
      <Browser />
      <Page />
      <SystemBar />
    </Screen>
  );
}
